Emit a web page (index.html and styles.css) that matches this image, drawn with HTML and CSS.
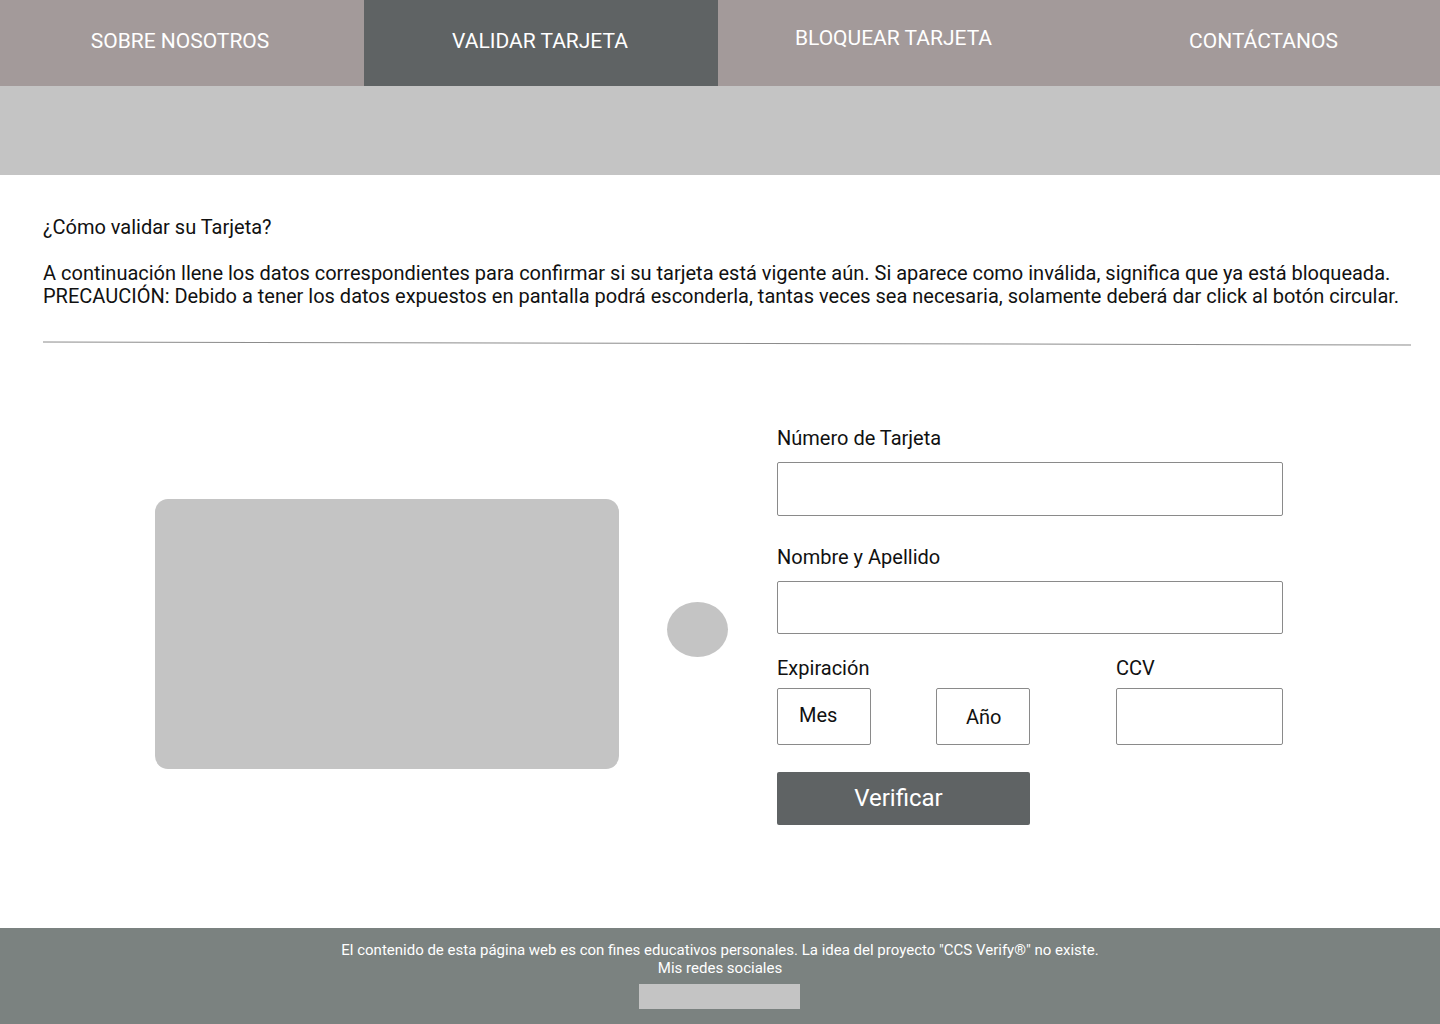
FILE: index.html
```html
<!DOCTYPE html>
<html lang="es">
<head>
<meta charset="utf-8">
<title>CCS Verify - Validar Tarjeta</title>
<link rel="stylesheet" href="styles.css">
</head>
<body>
<header class="nav">
  <a class="nav-item first">SOBRE NOSOTROS</a>
  <a class="nav-item active">VALIDAR TARJETA</a>
  <a class="nav-item raised">BLOQUEAR TARJETA</a>
  <a class="nav-item last">CONTÁCTANOS</a>
</header>
<div class="banner"></div>
<main class="content">
  <p class="intro-title">¿Cómo validar su Tarjeta?</p>
  <p class="intro-text">A continuación llene los datos correspondientes para confirmar si su tarjeta está vigente aún. Si aparece como inválida, significa que ya está bloqueada.<br>PRECAUCIÓN: Debido a tener los datos expuestos en pantalla podrá esconderla, tantas veces sea necesaria, solamente deberá dar click al botón circular.</p>
  <div class="divider"></div>
  <section class="validate">
    <div class="card-zone">
      <div class="card"></div>
      <div class="toggle"></div>
    </div>
    <form class="form">
      <label class="label">Número de Tarjeta</label>
      <div class="input"></div>
      <label class="label second">Nombre y Apellido</label>
      <div class="input short"></div>
      <div class="exp-row">
        <div class="exp-col">
          <label class="label small-gap">Expiración</label>
          <div class="exp-boxes">
            <div class="box mes">Mes</div>
            <div class="box anio">Año</div>
          </div>
        </div>
        <div class="ccv-col">
          <label class="label small-gap">CCV</label>
          <div class="box ccv"></div>
        </div>
      </div>
      <div class="button">Verificar</div>
    </form>
  </section>
</main>
<footer class="footer">
  <p class="footer-text">El contenido de esta página web es con fines educativos personales. La idea del proyecto "CCS Verify®" no existe.</p>
  <p class="footer-text">Mis redes sociales</p>
  <div class="social"></div>
</footer>
</body>
</html>
```
FILE: styles.css
```css
* { box-sizing: border-box; }
html, body { margin: 0; padding: 0; }
body {
  font-family: Roboto, "Liberation Sans", Arial, sans-serif;
  color: #111;
  background: #fff;
  width: 1440px;
}
.nav {
  display: grid;
  grid-template-columns: 364px 354px 1fr 1fr;
  height: 86px;
  background: #a39a9a;
}
.nav-item {
  color: #fff;
  font-size: 21px;
  line-height: 24px;
  text-align: center;
  padding-top: 29px;
}
.nav-item.first { padding-right: 4px; }
.nav-item.active { background: #5f6364; padding-right: 2px; }
.nav-item.raised { padding-top: 26px; padding-right: 10px; }
.nav-item.last { padding-left: 8px; }
.banner { height: 89px; background: #c4c4c4; }
.content { padding: 41px 29px 0 43px; }
.intro-title {
  margin: 0 0 23px;
  font-size: 20px;
  line-height: 23px;
}
.intro-text {
  margin: 0;
  font-size: 20px;
  line-height: 23px;
  white-space: nowrap;
}
.divider {
  margin-top: 35px;
  height: 0;
  border-top: 1px solid #8c8c8c;
  transform: rotate(0.12deg);
}
.validate {
  display: flex;
  align-items: flex-start;
  padding-top: 84px;
  padding-bottom: 103px;
}
.card-zone {
  display: flex;
  align-items: center;
  margin-left: 112px;
  margin-top: 71px;
}
.card {
  width: 464px;
  height: 270px;
  background: #c4c4c4;
  border-radius: 13px;
}
.toggle {
  width: 61px;
  height: 55px;
  margin-left: 48px;
  margin-bottom: 9px;
  border-radius: 50%;
  background: #c4c4c4;
}
.form {
  width: 506px;
  margin-left: 49px;
  display: flex;
  flex-direction: column;
}
.label {
  display: block;
  font-size: 20px;
  line-height: 21px;
  margin-bottom: 13px;
  white-space: nowrap;
}
.label.second { margin-top: 31px; }
.label.small-gap { margin-bottom: 9px; }
.input {
  height: 54px;
  border: 1px solid #8a8a8a;
  border-radius: 2px;
}
.input.short { height: 53px; }
.exp-row {
  display: flex;
  justify-content: space-between;
  margin-top: 24px;
}
.exp-boxes { display: flex; gap: 65px; }
.box {
  width: 94px;
  height: 57px;
  border: 1px solid #8a8a8a;
  border-radius: 2px;
  font-size: 20px;
  line-height: 24px;
}
.box.mes { padding: 14px 0 0 21px; }
.box.anio { padding: 16px 0 0 29px; }
.box.ccv { width: 167px; }
.button {
  margin-top: 27px;
  width: 253px;
  height: 53px;
  background: #5f6364;
  border-radius: 2px;
  color: #fff;
  font-size: 24px;
  line-height: 53px;
  text-align: center;
  padding-right: 10px;
}
.footer {
  height: 96px;
  background: #7b8280;
  color: #fff;
  text-align: center;
  padding-top: 13px;
}
.footer-text {
  margin: 0;
  font-size: 15px;
  line-height: 18px;
}
.social {
  width: 161px;
  height: 25px;
  margin: 7px 0 0 639px;
  background: #c4c4c4;
}
```
